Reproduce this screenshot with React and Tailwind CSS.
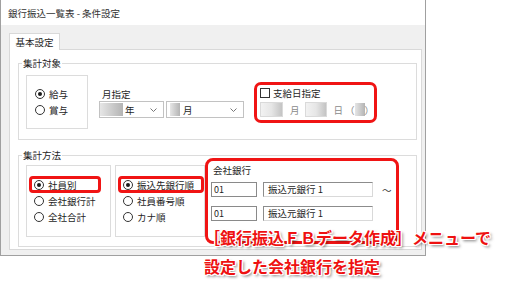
import React from "react";

function Radio({ checked, label }) {
  return (
    <div className="flex items-center h-[16px]">
      <span className="w-[10px] h-[10px] rounded-full border border-[#333] bg-white flex items-center justify-center">
        {checked && <span className="w-[4px] h-[4px] rounded-full bg-[#1a1a1a]" />}
      </span>
      <span className="ml-[4px]">{label}</span>
    </div>
  );
}

function Chevron() {
  return (
    <svg width="7" height="4" viewBox="0 0 7 4" className="ml-auto mr-[6px]">
      <polyline points="0.5,0.5 3.5,3.5 6.5,0.5" fill="none" stroke="#777" strokeWidth="1" />
    </svg>
  );
}

function Redacted({ className }) {
  return <span className={"block bg-gradient-to-r from-[#e6e6e6] to-[#b4b4b4] " + className} />;
}

export default function App() {
  return (
    <div className="w-[508px] h-[291px] bg-white relative overflow-hidden font-['Noto_Sans_CJK_JP','Noto_Sans',sans-serif] text-[9.5px] leading-[14px] text-[#1e1e1e]">
      {/* window */}
      <div className="w-[426px] h-[256px] border-x border-b border-[#a0a0a0] flex flex-col">
        <div className="shrink-0 h-[25px] bg-white pl-[7px] flex items-center text-[#333]">
          銀行振込一覧表 - 条件設定
        </div>

        <div className="flex-1 min-h-0 bg-[#f0f0f0] pl-[8px] pr-[3px] pt-[8px] pb-[5px] flex flex-col">
          <div className="shrink-0 self-start h-[17px] w-[51px] border border-b-0 border-[#d9d9d9] bg-white flex items-center justify-center relative z-10 -mb-px">
            基本設定
          </div>

          <div className="flex-1 min-h-0 bg-white border border-[#d9d9d9] pl-[8px] pr-[4px] flex flex-col">
            {/* 集計対象 */}
            <fieldset className="mt-[6px] border border-[#dcdcdc] px-[7px] pb-[10px]">
              <legend className="ml-[-4px] px-[1px]">集計対象</legend>
              <div className="flex items-start">
                <div className="mt-[5px] w-[62px] h-[54px] border border-[#dcdcdc] pl-[8px] pt-[10px]">
                  <Radio checked label="給与" />
                  <Radio label="賞与" />
                </div>

                <div className="ml-[11px] mt-[17px] flex flex-col">
                  <div className="pl-[3px]">月指定</div>
                  <div className="flex gap-[2px]">
                    <div className="w-[65px] h-[17px] border border-[#c2c2c2] bg-white flex items-center">
                      <Redacted className="w-[23px] h-[13px]" />
                      <span className="ml-[2px]">年</span>
                      <Chevron />
                    </div>
                    <div className="w-[78px] h-[17px] border border-[#c2c2c2] bg-white flex items-center">
                      <Redacted className="ml-[3px] w-[10px] h-[13px]" />
                      <span className="ml-[3px]">月</span>
                      <Chevron />
                    </div>
                  </div>
                </div>

                <div className="ml-[10px] mt-[12px] w-[123px] h-[41px] border-[3px] border-[#f01414] rounded-[7px] pl-[3px] pt-[1px]">
                  <div className="flex items-center h-[14px]">
                    <span className="w-[10px] h-[10px] border border-[#333] bg-white" />
                    <span className="ml-[3px]">支給日指定</span>
                  </div>
                  <div className="mt-[2px] flex items-center text-[#8a8a8a]">
                    <span className="w-[23px] h-[15px] border border-[#dadada] bg-gradient-to-r from-[#f2f2f2] via-[#e6e6e6] to-[#c4c4c4]" />
                    <span className="ml-[7px]">月</span>
                    <span className="ml-[5px] w-[23px] h-[15px] border border-[#dadada] bg-gradient-to-r from-[#f2f2f2] via-[#e6e6e6] to-[#c4c4c4]" />
                    <span className="ml-[6px]">日</span>
                    <span className="ml-[2px]">（</span>
                    <Redacted className="w-[10px] h-[13px]" />
                    <span>）</span>
                  </div>
                </div>
              </div>
            </fieldset>

            {/* 集計方法 */}
            <fieldset className="mt-[8px] border border-[#dcdcdc] px-[7px] pb-[9px]">
              <legend className="ml-[-4px] px-[1px]">集計方法</legend>
              <div className="flex items-start">
                <div className="mt-[3px] w-[85px] h-[72px] border border-[#dcdcdc] pl-[7px] pt-[11px] relative">
                  <Radio checked label="社員別" />
                  <Radio label="会社銀行計" />
                  <Radio label="全社合計" />
                  <span className="absolute left-[2px] top-[10px] w-[72px] h-[17px] border-[3px] border-[#f01414] rounded-[4px]" />
                </div>

                <div className="ml-[4px] mt-[3px] w-[90px] h-[72px] border border-[#dcdcdc] pl-[7px] pt-[11px] relative">
                  <Radio checked label="振込先銀行順" />
                  <Radio label="社員番号順" />
                  <Radio label="カナ順" />
                  <span className="absolute left-[2px] top-[10px] w-[86px] h-[17px] border-[3px] border-[#f01414] rounded-[4px]" />
                </div>

                <div className="mt-[-4px] mb-[-10px] w-[194px] h-[86px] border-[3px] border-[#f01414] rounded-[8px] pl-[3px] pt-[2px] bg-white">
                  <div className="ml-[2px]">会社銀行</div>
                  <div className="mt-[5px] flex items-center">
                    <span className="w-[46px] h-[15px] border border-[#8a8a8a] bg-white pl-[2px] text-[9px] leading-[13px]">01</span>
                    <span className="ml-[6px] w-[110px] h-[15px] border border-t-[#8c8c8c] border-l-[#8c8c8c] border-r-[#d9d9d9] border-b-[#d9d9d9] bg-white pl-[4px] leading-[13px]">振込元銀行 1</span>
                    <span className="ml-[9px] text-[#333]">～</span>
                  </div>
                  <div className="mt-[9px] flex items-center">
                    <span className="w-[46px] h-[15px] border border-[#8a8a8a] bg-white pl-[2px] text-[9px] leading-[13px]">01</span>
                    <span className="ml-[6px] w-[110px] h-[15px] border border-t-[#8c8c8c] border-l-[#8c8c8c] border-r-[#d9d9d9] border-b-[#d9d9d9] bg-white pl-[4px] leading-[13px]">振込元銀行 1</span>
                  </div>
                </div>
              </div>
            </fieldset>
          </div>
        </div>
      </div>

      {/* callout */}
      <div className="absolute left-[204px] top-[223px] text-[16px] leading-[29px] font-bold text-[#ee1111] whitespace-nowrap [text-shadow:1px_0_0_#fff,-1px_0_0_#fff,0_1px_0_#fff,0_-1px_0_#fff,1px_1px_0_#fff,-1px_-1px_0_#fff,1px_-1px_0_#fff,-1px_1px_0_#fff,2px_2px_3px_rgba(0,0,0,0.55)]">
        <div>［銀行振込ＦＢデータ作成］メニューで</div>
        <div>設定した会社銀行を指定</div>
      </div>
    </div>
  );
}
